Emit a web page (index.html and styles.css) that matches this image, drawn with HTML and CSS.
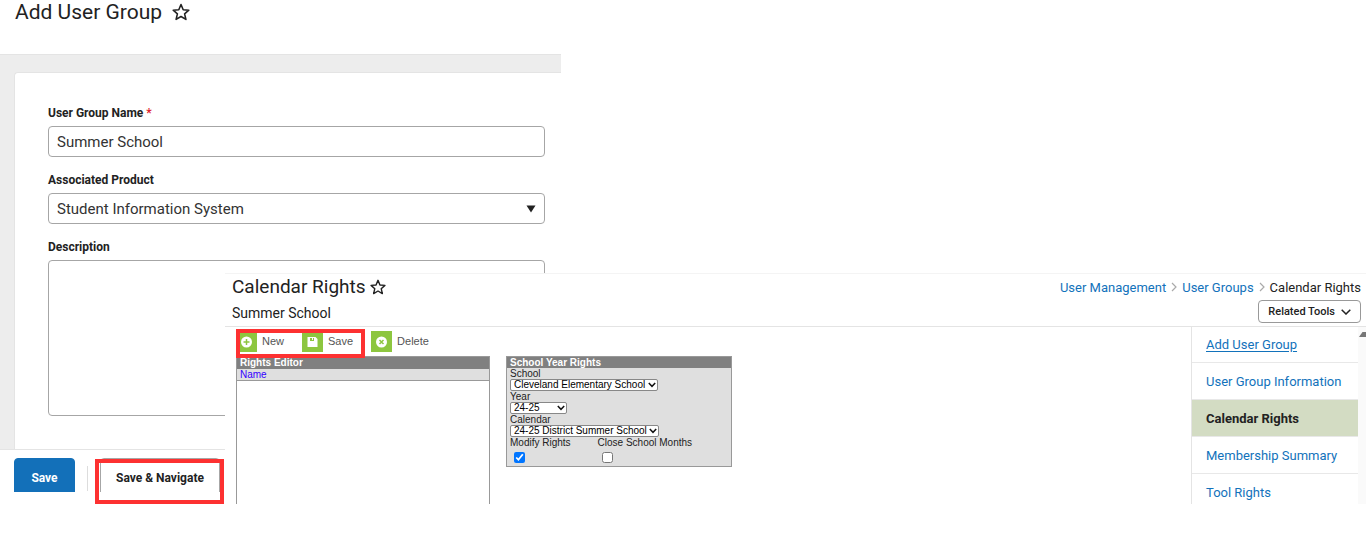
FILE: index.html
```html
<!DOCTYPE html>
<html lang="en">
<head>
<meta charset="utf-8">
<title>Add User Group</title>
<link rel="stylesheet" href="styles.css">
</head>
<body>
<div class="stage">

  <!-- Add User Group -->
  <div class="group-window">
    <div class="group-header">
      <h1 class="title">Add User Group</h1>
      <svg class="star" viewBox="0 0 18 18"><path d="M9 1.500l2.200 5.200 5.600.5-4.200 3.700 1.300 5.500L9 13.500l-4.900 2.900 1.300-5.500L1.200 7.200l5.600-.5z"/></svg>
    </div>
    <div class="group-content">
      <form class="card">
        <div class="field">
          <label for="groupName">User Group Name <span class="required">*</span></label>
          <input class="control" type="text" id="groupName" value="Summer School">
        </div>
        <div class="field">
          <label for="product">Associated Product</label>
          <div class="select-wrap">
            <select class="control" id="product"><option>Student Information System</option></select>
            <svg class="triangle" viewBox="0 0 10 8"><path d="M0.500 0.500h9L5 7.500z"/></svg>
          </div>
        </div>
        <div class="field">
          <label for="description">Description</label>
          <textarea class="control description" id="description"></textarea>
        </div>
      </form>
    </div>
    <div class="group-footer">
      <button type="button" class="btn btn-primary">Save</button>
      <span class="divider"></span>
      <button type="button" class="btn btn-plain">Save &amp; Navigate</button>
    </div>
  </div>

  <!-- Calendar Rights -->
  <div class="rights-window">
    <div class="rights-header">
      <div class="heading">
        <div class="heading-row">
          <h2 class="title">Calendar Rights</h2>
          <svg class="star" viewBox="0 0 18 18"><path d="M9 1.500l2.200 5.200 5.600.5-4.200 3.700 1.300 5.500L9 13.500l-4.900 2.900 1.300-5.500L1.200 7.200l5.600-.5z"/></svg>
        </div>
        <div class="subtitle">Summer School</div>
      </div>
      <div class="header-side">
        <nav class="breadcrumb">
          <a href="#">User Management</a>
          <svg viewBox="0 0 6 10"><path d="M1 1l4 4-4 4"/></svg>
          <a href="#">User Groups</a>
          <svg viewBox="0 0 6 10"><path d="M1 1l4 4-4 4"/></svg>
          <span>Calendar Rights</span>
        </nav>
        <button type="button" class="related">Related Tools
          <svg viewBox="0 0 10 6"><path d="M0.700 0.700L5 5l4.300-4.300"/></svg>
        </button>
      </div>
    </div>
    <div class="rights-body">
      <div class="workspace">
        <div class="toolbar">
          <button type="button" class="tool">
            <svg viewBox="0 0 21 21"><rect width="21" height="21" fill="#8dc63f"/><circle cx="10.500" cy="11" r="5.500" fill="#fff"/><path d="M10.500 8v6M7.500 11h6" stroke="#8dc63f" stroke-width="1.500"/></svg>
            New
          </button>
          <button type="button" class="tool">
            <svg viewBox="0 0 21 21"><rect width="21" height="21" fill="#8dc63f"/><path d="M5.500 6h8l2 2v8h-10z" fill="#fff"/><path d="M8 7h4v3H8z" fill="#8dc63f"/><path d="M10 7h1v2h-1z" fill="#fff"/></svg>
            Save
          </button>
          <button type="button" class="tool">
            <svg viewBox="0 0 21 21"><rect width="21" height="21" fill="#8dc63f"/><circle cx="10.500" cy="11" r="5.500" fill="#fff"/><path d="M8.500 9l4 4M12.500 9l-4 4" stroke="#8dc63f" stroke-width="1.500"/></svg>
            Delete
          </button>
        </div>
        <div class="panels">
          <table class="editor">
            <thead>
              <tr><th class="panel-title">Rights Editor</th></tr>
              <tr><th class="column-name"><a href="#">Name</a></th></tr>
            </thead>
            <tbody><tr><td></td></tr></tbody>
          </table>
          <form class="year-rights">
            <h3 class="panel-title">School Year Rights</h3>
            <div class="year-fields">
              <label for="school">School</label>
              <div class="mini-select">
                <select id="school"><option>Cleveland Elementary School</option></select>
                <svg viewBox="0 0 8 6"><path d="M0.800 1L4 4.300 7.200 1"/></svg>
              </div>
              <label for="year">Year</label>
              <div class="mini-select mini-year">
                <select id="year"><option>24-25</option></select>
                <svg viewBox="0 0 8 6"><path d="M0.800 1L4 4.300 7.200 1"/></svg>
              </div>
              <label for="calendar">Calendar</label>
              <div class="mini-select">
                <select id="calendar"><option>24-25 District Summer School</option></select>
                <svg viewBox="0 0 8 6"><path d="M0.800 1L4 4.300 7.200 1"/></svg>
              </div>
              <div class="checks">
                <div class="check">
                  <label for="modify">Modify Rights</label>
                  <input type="checkbox" id="modify" checked>
                </div>
                <div class="check">
                  <label for="closeMonths">Close School Months</label>
                  <input type="checkbox" id="closeMonths">
                </div>
              </div>
            </div>
          </form>
        </div>
      </div>
      <nav class="side-menu">
        <a class="underlined" href="#">Add User Group</a>
        <a href="#">User Group Information</a>
        <a class="active" href="#">Calendar Rights</a>
        <a href="#">Membership Summary</a>
        <a href="#">Tool Rights</a>
      </nav>
      <div class="scrollbar"><svg viewBox="0 0 8 7"><path d="M1 6l3.500-5H8v5z"/></svg></div>
    </div>
  </div>

  <div class="callout callout-navigate"></div>
  <div class="callout callout-toolbar"></div>
</div>
</body>
</html>
```
FILE: styles.css
```css
* { box-sizing:border-box; }
body { margin:0; background:#fff; color:#222; font-family:Roboto, "Liberation Sans", sans-serif; }
h1, h2, h3 { margin:0; font-weight:400; }
a { color:#1272bb; text-decoration:none; }
button, input, select, textarea { font-family:inherit; color:inherit; }
.stage { position:relative; min-height:100vh; overflow:hidden; }
.title { font-size:21px; line-height:26px; }
.star { width:18px; height:18px; fill:none; stroke:#222; stroke-width:1.6; stroke-linejoin:round; }

/* group window */
.group-window { max-width:561px; height:492px; overflow:hidden; display:flex; flex-direction:column; }
.group-header { display:flex; align-items:flex-start; gap:10px; height:54px; flex:none; padding-left:15px; }
.group-header .title { line-height:24px; }
.group-header .star { margin-top:3px; }
.group-content { flex:1; min-height:0; overflow:hidden; background:#ededed; border-top:1px solid #e4e4e4; padding:17px 0 0 14px; }
.card { height:100%; background:#fff; border:1px solid #e4e4e4; border-width:1px 0 0 1px; border-top-left-radius:4px; padding:33px 16px 0 33px; }
.field { margin-bottom:16px; }
.field label { display:block; font-size:12px; line-height:14px; font-weight:700; margin-bottom:6px; }
.required { color:#e01f2d; }
.control { display:block; width:100%; height:31px; border:1px solid #a6a6a6; border-radius:4px; background:#fff; padding:0 8px; font-size:15px; color:#333; appearance:none; }
.description { height:156px; resize:none; }
.select-wrap { position:relative; }
.triangle { position:absolute; right:9px; top:12px; width:10px; height:8px; fill:#222; pointer-events:none; }
.group-footer { flex:none; height:43px; border-top:1px solid #e4e4e4; background:#fff; display:flex; align-items:flex-start; gap:12px; padding:8px 0 0 14px; }
.btn { flex:none; height:40px; border-radius:4px; padding:0 15px; font-size:12px; font-weight:700; }
.btn-primary { background:#1370b9; color:#fff; border:1px solid #1370b9; width:61px; }
.btn-plain { background:#fff; border:1px solid #a6a6a6; }
.divider { width:1px; height:25px; margin-top:8px; background:#ddd; }

/* rights window */
.rights-window { position:absolute; left:225px; right:0; top:273px; height:231px; overflow:hidden; background:#fff; border-top:1px solid #f4f4f4; display:flex; flex-direction:column; }
.rights-header { flex:none; height:53px; border-bottom:1px solid #e4e4e4; display:flex; justify-content:space-between; padding:0 5px 0 7px; }
.heading-row { display:flex; align-items:center; gap:4px; }
.heading-row .title { font-size:19px; }
.heading-row .star { width:16px; height:16px; }
.subtitle { font-size:14px; line-height:26px; }
.header-side { display:flex; flex-direction:column; align-items:flex-end; }
.breadcrumb { display:flex; align-items:center; gap:5px; height:26px; font-size:13px; }
.breadcrumb svg { width:6px; height:10px; fill:none; stroke:#aaa; stroke-width:1.2; }
.related { display:flex; align-items:center; gap:6px; height:23px; border:1px solid #999; border-radius:4px; background:#fff; padding:0 9px; font-size:11px; font-weight:500; }
.related svg { width:10px; height:6px; fill:none; stroke:#222; stroke-width:1.5; }
.rights-body { flex:1; min-height:0; display:flex; }
.workspace { flex:1; display:flex; flex-direction:column; padding:4px 0 0 11px; font-family:"Liberation Sans", Arial, sans-serif; }
.toolbar { display:flex; gap:18px; height:25px; }
.tool { display:flex; align-items:flex-start; gap:5px; border:0; background:none; padding:0; font-size:11px; line-height:20px; color:#555; }
.tool svg { width:21px; height:21px; }
.panels { flex:1; display:flex; align-items:flex-start; gap:16px; }
.editor { width:254px; height:100%; border:1px solid #999; border-bottom:0; border-collapse:collapse; font-size:10px; }
.editor th, .editor td { padding:0 3px; text-align:left; }
.editor th { height:12px; line-height:11px; }
.editor .column-name { background:#dfdfdf; border-bottom:1px solid #999; font-weight:400; }
.editor a { color:#30f; }
.panel-title { background:#808080; color:#fff; font-size:10px; line-height:11px; font-weight:700; padding:0 3px; }
.year-rights { width:226px; height:111px; background:#dfdfdf; border:1px solid #999; font-size:10px; color:#222; }
.year-fields { padding:0 3px; }
.year-fields label { display:block; line-height:11px; }
.mini-select { position:relative; width:max-content; }
.mini-select select { display:block; height:12px; border:1px solid #888; border-radius:2px; background:#fff; appearance:none; font-size:10px; line-height:10px; padding:0 11px 0 3px; color:#000; }
.mini-select svg { position:absolute; right:2px; top:3px; width:8px; height:6px; fill:none; stroke:#111; stroke-width:1.5; pointer-events:none; }
.mini-year select { width:57px; }
.checks { display:flex; gap:27px; }
.check input { display:block; width:11px; height:11px; margin:4px; }
.side-menu { flex:none; width:167px; margin-top:-1px; border-left:1px solid #e4e4e4; font-size:13px; }
.side-menu a { display:flex; align-items:center; height:37px; padding-left:14px; border-bottom:1px solid #e8e8e8; }
.side-menu .underlined { text-decoration:underline; text-underline-offset:2px; }
.side-menu .active { background:#d3dcc3; color:#222; font-weight:700; }
.scrollbar { flex:none; width:8px; background:#fafafa; }
.scrollbar svg { display:block; width:8px; height:7px; margin-top:4px; fill:#777; }

/* callouts */
.callout { position:absolute; border:4px solid #fd3131; pointer-events:none; }
.callout-navigate { left:95px; top:459px; width:129px; height:45px; }
.callout-toolbar { left:236px; top:329px; width:129px; height:29px; }
```
